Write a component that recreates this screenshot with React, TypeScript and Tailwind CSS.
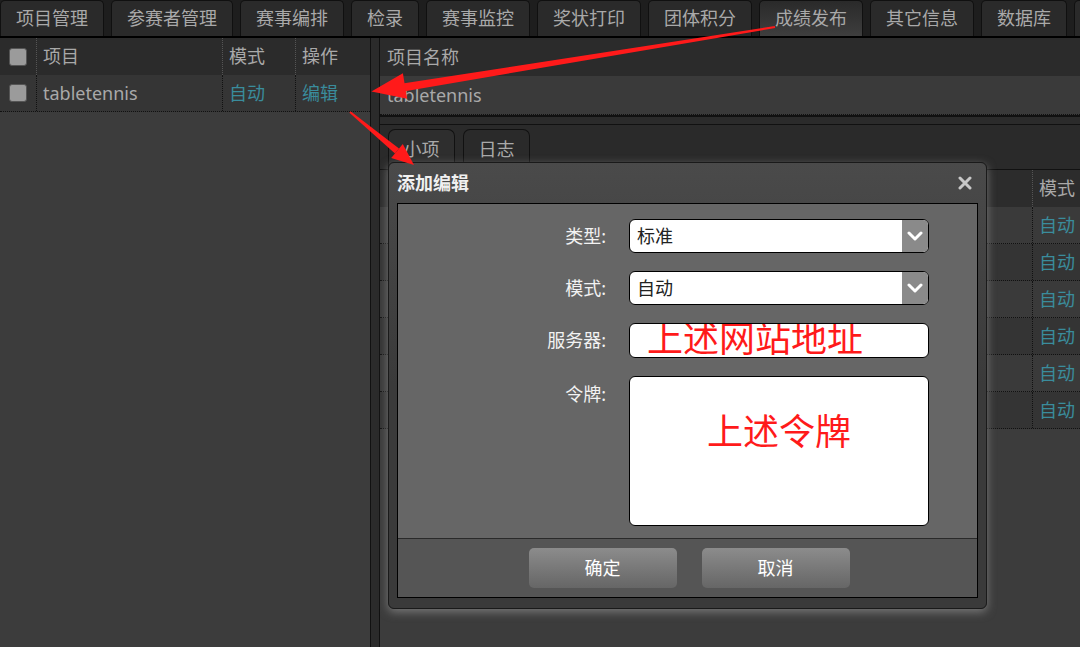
import React from "react";

const tabs = ["项目管理", "参赛者管理", "赛事编排", "检录", "赛事监控", "奖状打印", "团体积分", "成绩发布", "其它信息", "数据库", "系统"];

function Checkbox() {
  return <div className="w-[18px] h-[18px] rounded-[3px] bg-[#9b9b9b] border border-[#555]" />;
}

function Chevron() {
  return (
    <div className="w-[26px] h-[32px] bg-[#8a8a8a] flex items-center justify-center rounded-r-[5px]">
      <svg width="16" height="10" viewBox="0 0 16 10">
        <path d="M2 2 L8 8 L14 2" fill="none" stroke="#fff" strokeWidth="3" strokeLinecap="round" strokeLinejoin="round" />
      </svg>
    </div>
  );
}

export default function App() {
  const font = { fontFamily: '"Noto Sans", "Noto Sans CJK SC", sans-serif' };
  const rows = [0, 1, 2, 3, 4, 5];
  return (
    <div className="relative w-[1080px] h-[647px] overflow-hidden bg-[#3c3c3c]" style={font}>
      {/* top tabs */}
      <div className="flex h-[38px] bg-[#1e1e1e] border-b-2 border-black gap-[7px] items-end">
        {tabs.map((t) => (
          <div
            key={t}
            className={`h-[36px] shrink-0 px-[15px] flex items-center rounded-t-[5px] border border-b-0 border-[#101010] text-[18px] text-[#a9a9a9] ${
              t === "成绩发布" ? "bg-gradient-to-b from-[#2a2a2a] to-[#3e3e3e]" : "bg-[#2a2a2a]"
            }`}
          >
            {t}
          </div>
        ))}
      </div>

      <div className="flex h-[609px]">
        {/* left panel */}
        <div className="w-[370px] shrink-0 bg-[#3c3c3c] flex flex-col">
          <div className="flex h-[37px] bg-[#2b2b2b] text-[18px] text-[#a9a9a9]">
            <div className="w-[37px] flex items-center justify-center border-r border-dotted border-[#555]"><Checkbox /></div>
            <div className="w-[186px] flex items-center pl-[6px] border-r border-dotted border-[#555]">项目</div>
            <div className="w-[73px] flex items-center pl-[6px] border-r border-dotted border-[#555]">模式</div>
            <div className="w-[74px] flex items-center pl-[6px]">操作</div>
          </div>
          <div className="flex h-[37px] bg-[#353535] text-[18px] border-b border-dotted border-[#111]">
            <div className="w-[37px] flex items-center justify-center border-r border-dotted border-[#111]"><Checkbox /></div>
            <div className="w-[186px] flex items-center pl-[6px] border-r border-dotted border-[#111] text-[#a9a9a9]">tabletennis</div>
            <div className="w-[73px] flex items-center pl-[6px] border-r border-dotted border-[#111] text-[#3a8c9c]">自动</div>
            <div className="w-[74px] flex items-center pl-[6px] text-[#3a8c9c]">编辑</div>
          </div>
        </div>

        {/* divider */}
        <div className="w-[10px] shrink-0 bg-[#2b2b2b] border-l border-r border-[#111]" />

        {/* right panel */}
        <div className="flex-1 flex flex-col bg-[#3c3c3c]">
          <div className="h-[38px] bg-[#2b2b2b] flex items-center pl-[7px] text-[18px] text-[#a9a9a9]">项目名称</div>
          <div className="h-[39px] bg-[#3a3a3a] flex items-center pl-[7px] text-[18px] text-[#a9a9a9] border-b border-dotted border-[#111]">tabletennis</div>
          <div className="h-[10px] bg-[#2b2b2b] border-t-2 border-b border-[#111]" />
          <div className="h-[44px] bg-[#2a2a2a] flex items-end gap-[8px] pl-[8px]">
            <div className="h-[40px] w-[67px] rounded-t-[7px] border border-b-0 border-[#111] bg-[#2e2e2e] flex items-center justify-center text-[18px] text-[#a9a9a9]">小项</div>
            <div className="h-[40px] w-[67px] rounded-t-[7px] border border-b-0 border-[#111] bg-[#2a2a2a] flex items-center justify-center text-[18px] text-[#a9a9a9]">日志</div>
          </div>
          <div className="flex h-[38px] bg-[#2c2c2c] border-t border-[#111] text-[18px] text-[#a9a9a9]">
            <div className="flex-1 border-r border-dotted border-[#555]" />
            <div className="w-[47px] flex items-center pl-[6px]">模式</div>
          </div>
          {rows.map((r) => (
            <div key={r} className={`flex h-[37px] border-b border-dotted border-[#111] text-[18px] ${r % 2 === 0 ? "bg-[#3a3a3a]" : "bg-[#343434]"}`}>
              <div className="flex-1 border-r border-dotted border-[#111]" />
              <div className="w-[47px] flex items-center pl-[6px] text-[#3a8c9c]">自动</div>
            </div>
          ))}
        </div>
      </div>

      {/* dialog */}
      <div className="absolute left-[388px] top-[162px] w-[599px] h-[447px] rounded-[6px] border border-[#1a1a1a] bg-gradient-to-b from-[#4a4a4a] via-[#3a3a3a] to-[#3a3a3a] shadow-[0_3px_10px_rgba(140,140,140,0.75)] flex flex-col px-[8px]">
        <div className="h-[40px] shrink-0 flex items-center justify-between">
          <span className="text-[18px] font-bold text-[#f0f0f0] pt-[1px]">添加编辑</span>
          <svg width="14" height="14" viewBox="0 0 14 14" className="mr-[6px]">
            <path d="M2 2 L12 12 M12 2 L2 12" stroke="#c8c8c8" strokeWidth="3" strokeLinecap="round" />
          </svg>
        </div>
        <div className="flex-1 mb-[10px] border border-black flex flex-col">
          <div className="flex-1 bg-[#666666] pt-[15px] flex flex-col gap-[18px]">
            <div className="flex items-center">
              <div className="w-[208px] text-right text-[18px] text-[#f2f2f2]">类型:</div>
              <div className="ml-[23px] w-[300px] h-[34px] bg-white border border-black rounded-[6px] flex items-center justify-between pl-[7px] text-[18px] text-[#222]">
                <span>标准</span>
                <Chevron />
              </div>
            </div>
            <div className="flex items-center">
              <div className="w-[208px] text-right text-[18px] text-[#f2f2f2]">模式:</div>
              <div className="ml-[23px] w-[300px] h-[34px] bg-white border border-black rounded-[6px] flex items-center justify-between pl-[7px] text-[18px] text-[#222]">
                <span>自动</span>
                <Chevron />
              </div>
            </div>
            <div className="flex items-center">
              <div className="w-[208px] text-right text-[18px] text-[#f2f2f2]">服务器:</div>
              <div className="ml-[23px] w-[300px] h-[35px] bg-white border border-black rounded-[6px] overflow-hidden pl-[17px]">
                <div className="text-[36px] leading-[36px] text-[#ff1a1a] -mt-[3px] whitespace-nowrap">上述网站地址</div>
              </div>
            </div>
            <div className="flex items-start">
              <div className="w-[208px] text-right text-[18px] text-[#f2f2f2] pt-[5px]">令牌:</div>
              <div className="ml-[23px] w-[300px] h-[150px] bg-white border border-black rounded-[6px] flex justify-center pt-[34px]">
                <div className="text-[36px] leading-[42px] text-[#ff1a1a]">上述令牌</div>
              </div>
            </div>
          </div>
          <div className="h-[59px] shrink-0 bg-[#555555] border-t border-[#2a2a2a] flex items-center justify-center gap-[25px] pl-[3px]">
            <div className="w-[148px] h-[40px] rounded-[5px] bg-gradient-to-b from-[#8c8c8c] to-[#666] flex items-center justify-center text-[18px] text-white">确定</div>
            <div className="w-[148px] h-[40px] rounded-[5px] bg-gradient-to-b from-[#8c8c8c] to-[#666] flex items-center justify-center text-[18px] text-white">取消</div>
          </div>
        </div>
      </div>

      {/* annotation arrows */}
      <svg className="absolute left-0 top-0 pointer-events-none" width="1080" height="647" viewBox="0 0 1080 647">
        <polygon points="775.2,28 774.8,26 399.4,84.1 400.6,91.9" fill="#ff1a1a" />
        <polygon points="407.1,98.8 402.9,73.2 371.4,91.4" fill="#ff1a1a" />
        <polygon points="349.4,112.8 350.6,111.2 399,148.5 395,153.5" fill="#ff1a1a" />
        <polygon points="391.2,157.9 402.8,144.1 414,165" fill="#ff1a1a" />
      </svg>
    </div>
  );
}
